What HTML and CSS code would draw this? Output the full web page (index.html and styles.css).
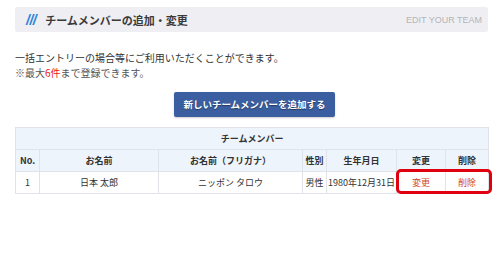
FILE: index.html
```html
<!DOCTYPE html>
<html lang="ja">
<head>
  <meta charset="UTF-8" />
  <title>チームメンバーの追加・変更</title>
  <link rel="stylesheet" href="styles.css">
</head>
<body>
  <div class="page">

    <!-- Title bar -->
    <div class="title-bar">
      <h2><span class="slashes">///</span>チームメンバーの追加・変更</h2>
      <span class="sub">EDIT YOUR TEAM</span>
    </div>

    <p class="lead">一括エントリーの場合等にご利用いただくことができます。</p>
    <p class="note">※最大<span class="red">6件</span>まで登録できます。</p>

    <div class="actions">
      <button type="button" class="add-btn">新しいチームメンバーを追加する</button>
    </div>

    <!-- Member table -->
    <div class="table-wrap">
      <table class="members">
        <colgroup>
          <col style="width:24px"><col style="width:119px"><col style="width:144px"><col style="width:24px"><col style="width:70px"><col style="width:49px"><col style="width:43px">
        </colgroup>
        <tr class="caption-row"><th colspan="7">チームメンバー</th></tr>
        <tr class="head-row">
          <th>No.</th><th>お名前</th><th>お名前（フリガナ）</th><th>性別</th><th>生年月日</th><th>変更</th><th>削除</th>
        </tr>
        <tr>
          <td>1</td><td>日本 太郎</td><td>ニッポン タロウ</td><td>男性</td><td>1980年12月31日</td>
          <td><a class="link" href="#">変更</a></td><td><a class="link" href="#">削除</a></td>
        </tr>
      </table>
      <div class="highlight"></div>
    </div>

  </div>
</body>
</html>
```

FILE: styles.css
```css
body {
  margin: 0;
  background: #fff;
  font-family: "Noto Sans CJK JP", "Noto Sans", sans-serif;
  color: #333;
}

.page {
  padding: 7px 10px 0 15px;
}

.title-bar {
  display: flex;
  align-items: center;
  justify-content: space-between;
  height: 25px;
  padding: 0 6px 0 11px;
  background: #efeff3;
  border-radius: 2px;
}

.title-bar h2 {
  display: flex;
  align-items: center;
  margin: 0;
  font-size: 11px;
  font-weight: bold;
  color: #3a3a3a;
}

.slashes {
  margin-right: 9px;
  color: #2f82d9;
  font-family: "Liberation Sans", sans-serif;
  font-style: italic;
  font-weight: bold;
  font-size: 14px;
  letter-spacing: -0.5px;
}

.sub {
  font-family: "Liberation Sans", sans-serif;
  font-size: 9px;
  color: #b4b4b8;
}

.lead, .note {
  margin: 0;
  font-size: 10px;
  line-height: 15px;
}

.lead {
  margin-top: 18px;
}

.note {
  color: #555;
}

.red {
  color: #e8141c;
}

.actions {
  text-align: center;
  padding: 9px 0 10px 6px;
}

.add-btn {
  height: 25px;
  padding: 0 9px;
  border: none;
  border-radius: 2px;
  background: #3a5e9f;
  color: #fff;
  font-family: inherit;
  font-size: 9.5px;
  font-weight: bold;
  text-shadow: 0 1px 1px rgba(0, 0, 0, 0.4);
  box-shadow: 0 1px 2px rgba(0, 0, 0, 0.2);
}

.table-wrap {
  position: relative;
  width: 473px;
}

.members {
  width: 473px;
  table-layout: fixed;
  border-collapse: collapse;
  font-size: 9px;
}

.members th, .members td {
  height: 21px;
  padding: 0;
  border: 1px solid #e0e3e8;
  text-align: center;
  white-space: nowrap;
}

.members th {
  background: #eef4fb;
  font-weight: bold;
  color: #333;
}

.members td {
  color: #333;
}

.link {
  color: #d2461e;
  text-decoration: none;
}

.highlight {
  position: absolute;
  left: 381px;
  top: 42px;
  width: 90px;
  height: 19px;
  border: 3px solid #e0000f;
  border-radius: 5px;
}
```
